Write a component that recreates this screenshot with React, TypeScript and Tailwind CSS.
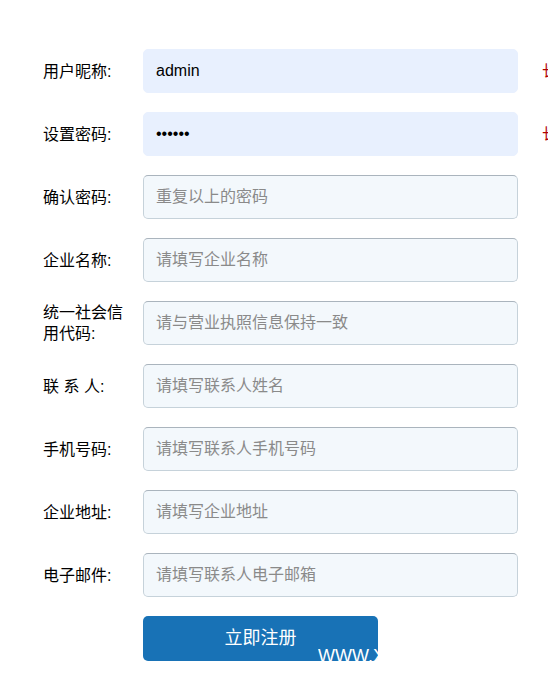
import React from 'react';

type Field = {
  label: React.ReactNode;
  placeholder?: string;
  value?: string;
  type?: string;
  autofill?: boolean;
  hint?: string;
};

const fields: Field[] = [
  { label: '用户昵称:', value: 'admin', autofill: true, hint: '长度为4-16位字符' },
  { label: '设置密码:', value: '123456', type: 'password', autofill: true, hint: '长度为6-20位字符' },
  { label: '确认密码:', placeholder: '重复以上的密码', type: 'password' },
  { label: '企业名称:', placeholder: '请填写企业名称' },
  {
    label: (
      <>
        统一社会信
        <br />
        用代码:
      </>
    ),
    placeholder: '请与营业执照信息保持一致',
  },
  { label: '联 系 人:', placeholder: '请填写联系人姓名' },
  { label: '手机号码:', placeholder: '请填写联系人手机号码' },
  { label: '企业地址:', placeholder: '请填写企业地址' },
  { label: '电子邮件:', placeholder: '请填写联系人电子邮箱' },
];

export default function App() {
  return (
    <main
      className="w-[548px] h-[673px] overflow-hidden bg-white text-black"
      style={{ fontFamily: '"Liberation Sans", "Noto Sans CJK SC", sans-serif' }}
    >
      <form className="pt-[49px] pl-[43px] flex flex-col">
        {fields.map((f, i) => (
          <div key={i} className="flex items-center h-[44px] mb-[19px]">
            <label className="w-[100px] shrink-0 text-[16px] leading-[21px] whitespace-pre">
              {f.label}
            </label>
            <input
              type={f.type ?? 'text'}
              defaultValue={f.value}
              placeholder={f.placeholder}
              className={
                'w-[375px] h-[44px] shrink-0 rounded-[5px] px-[12px] text-[16px] outline-none placeholder:text-[#8a8a8a] ' +
                (f.autofill
                  ? 'bg-[#e8f0fe] border border-[#e8f0fe]'
                  : 'bg-[#f3f8fc] border border-[#c6d2da] border-t-[#aab4bd]')
              }
            />
            {f.hint && (
              <span className="ml-[24px] whitespace-nowrap text-[15px] text-[#b00000]">{f.hint}</span>
            )}
          </div>
        ))}
        <div className="flex pl-[100px]">
          <button
            type="button"
            className="relative w-[235px] h-[45px] rounded-[5px] bg-[#1872b6] text-white text-[18px]"
          >
            立即注册
            <span className="absolute left-[175px] top-[30px] h-[15px] overflow-hidden text-[18px] leading-[20px] text-white pointer-events-none">
              WWW.X
            </span>
          </button>
        </div>
      </form>
    </main>
  );
}
